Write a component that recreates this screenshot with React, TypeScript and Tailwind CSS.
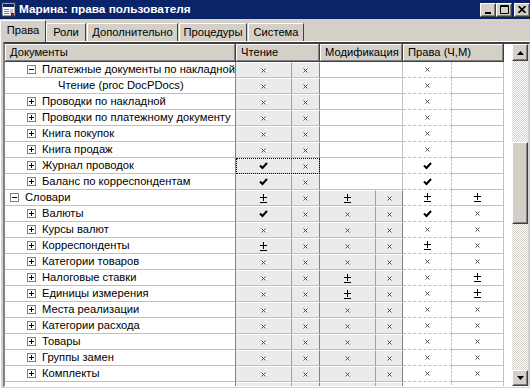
import React from "react";

type V = "x" | "c" | "pm" | "";

type Row = {
  label: string;
  level: 0 | 1 | 2;
  box?: "plus" | "minus";
  r: [V, V];
  m?: [V, V];
  p: [V, V];
};

const all: Pick<Row, "r" | "m" | "p"> = { r: ["x", "x"], m: ["x", "x"], p: ["x", "x"] };

const rows: Row[] = [
  { label: "Платежные документы по накладной/счету", level: 1, box: "minus", r: ["x", "x"], p: ["x", ""] },
  { label: "Чтение (proc DocPDocs)", level: 2, r: ["x", "x"], p: ["x", ""] },
  { label: "Проводки по накладной", level: 1, box: "plus", r: ["x", "x"], p: ["x", ""] },
  { label: "Проводки по платежному документу", level: 1, box: "plus", r: ["x", "x"], p: ["x", ""] },
  { label: "Книга покупок", level: 1, box: "plus", r: ["x", "x"], p: ["x", ""] },
  { label: "Книга продаж", level: 1, box: "plus", r: ["x", "x"], p: ["x", ""] },
  { label: "Журнал проводок", level: 1, box: "plus", r: ["c", "x"], p: ["c", ""] },
  { label: "Баланс по корреспондентам", level: 1, box: "plus", r: ["c", "x"], p: ["c", ""] },
  { label: "Словари", level: 0, box: "minus", r: ["pm", "x"], m: ["pm", "x"], p: ["pm", "pm"] },
  { label: "Валюты", level: 1, box: "plus", r: ["c", "x"], m: ["x", "x"], p: ["c", "x"] },
  { label: "Курсы валют", level: 1, box: "plus", ...all },
  { label: "Корреспонденты", level: 1, box: "plus", r: ["pm", "x"], m: ["x", "x"], p: ["pm", "x"] },
  { label: "Категории товаров", level: 1, box: "plus", ...all },
  { label: "Налоговые ставки", level: 1, box: "plus", r: ["x", "x"], m: ["pm", "x"], p: ["x", "pm"] },
  { label: "Единицы измерения", level: 1, box: "plus", r: ["x", "x"], m: ["pm", "x"], p: ["x", "pm"] },
  { label: "Места реализации", level: 1, box: "plus", ...all },
  { label: "Категории расхода", level: 1, box: "plus", ...all },
  { label: "Товары", level: 1, box: "plus", ...all },
  { label: "Группы замен", level: 1, box: "plus", ...all },
  { label: "Комплекты", level: 1, box: "plus", ...all },
  { label: "", level: 1, ...all },
];

function Mark({ v }: { v: V }) {
  if (v === "x")
    return (
      <svg width="5" height="5" viewBox="0 0 5 5">
        <path d="M0.5 0.5 L4.5 4.5 M4.5 0.5 L0.5 4.5" stroke="#505050" strokeWidth="1" />
      </svg>
    );
  if (v === "c")
    return (
      <svg width="9" height="8" viewBox="0 0 9 8">
        <path d="M1 3.5 L3.5 6 L8 1" stroke="#000" strokeWidth="2" fill="none" />
      </svg>
    );
  if (v === "pm")
    return (
      <svg width="7" height="9" viewBox="0 0 7 9">
        <path d="M0 3.5 H7 M3.5 0 V7 M0 8.5 H7" stroke="#000" strokeWidth="1" />
      </svg>
    );
  return null;
}

function TreeBox({ kind }: { kind: "plus" | "minus" }) {
  return (
    <svg width="9" height="9" viewBox="0 0 9 9" className="shrink-0">
      <rect x="0.5" y="0.5" width="8" height="8" fill="#fff" stroke="#808080" />
      <path d={kind === "plus" ? "M2 4.5 H7 M4.5 2 V7" : "M2 4.5 H7"} stroke="#000" />
    </svg>
  );
}

function Raised({ className = "", children }: { className?: string; children?: React.ReactNode }) {
  return (
    <div className={`border border-t-white border-l-white border-r-[#404040] border-b-[#404040] bg-[#d4d0c8] ${className}`}>
      <div className="flex h-full w-full items-center justify-center border border-t-[#d4d0c8] border-l-[#d4d0c8] border-r-[#808080] border-b-[#808080]">
        {children}
      </div>
    </div>
  );
}

function HeaderCell({ w, label }: { w: string; label: string }) {
  return (
    <div className={`${w} h-full shrink-0 border-r border-b border-r-[#404040] border-b-[#404040] bg-[#d4d0c8]`}>
      <div className="flex h-full items-center border-t border-l border-t-white border-l-white border-r border-b border-r-[#808080] border-b-[#808080] pl-[4px]">
        {label}
      </div>
    </div>
  );
}

function GridRow({ row, focus }: { row: Row; focus?: boolean }) {
  const indent = row.level === 0 ? "pl-[5px]" : row.level === 1 ? "pl-[22px]" : "pl-[53px]";
  return (
    <div className="flex h-[16px] shrink-0">
      <div className={`flex w-[231px] shrink-0 items-center gap-[6px] overflow-hidden whitespace-nowrap border-r border-b border-r-[#808080] border-b-[#c0c0c0] bg-white ${indent}`}>
        {row.box && <TreeBox kind={row.box} />}
        {row.label && <span>{row.label}</span>}
      </div>
      <div className="relative flex shrink-0">
        <div className="flex w-[56px] items-center justify-center border-r border-b border-r-[#a0a0a0] border-b-[#c0c0c0] border-t border-t-white bg-[#ebebeb]">
          <Mark v={row.r[0]} />
        </div>
        <div className="flex w-[28px] items-center justify-center border-r border-b border-r-[#808080] border-b-[#c0c0c0] border-t border-t-white bg-[#ebebeb]">
          <Mark v={row.r[1]} />
        </div>
        {focus && <div className="pointer-events-none absolute inset-0 border border-dotted border-black" />}
      </div>
      {row.m ? (
        <>
          <div className="flex w-[56px] shrink-0 items-center justify-center border-r border-b border-r-[#a0a0a0] border-b-[#c0c0c0] border-t border-t-white bg-[#ebebeb]">
            <Mark v={row.m[0]} />
          </div>
          <div className="flex w-[27px] shrink-0 items-center justify-center border-r border-b border-r-[#808080] border-b-[#c0c0c0] border-t border-t-white bg-[#ebebeb]">
            <Mark v={row.m[1]} />
          </div>
        </>
      ) : (
        <div className="w-[83px] shrink-0 border-r border-b border-r-[#c0c0c0] border-b-[#c0c0c0] bg-white" />
      )}
      <div className="flex w-[49px] shrink-0 items-center justify-center border-r border-dashed border-b border-r-[#c0c0c0] border-b-[#c0c0c0] bg-white">
        <Mark v={row.p[0]} />
      </div>
      <div className="flex w-[52px] shrink-0 items-center justify-center border-r border-b border-r-[#c0c0c0] border-b-[#c0c0c0] bg-white">
        <Mark v={row.p[1]} />
      </div>
      <div className="w-[8px] shrink-0 bg-white" />
    </div>
  );
}

function AppIcon() {
  return (
    <svg width="16" height="16" viewBox="0 0 16 16">
      <rect x="1" y="1" width="13" height="13" fill="#fff" stroke="#404040" />
      <rect x="2" y="2" width="11" height="3" fill="#0a246a" />
      <rect x="3" y="7" width="5" height="1" fill="#808080" />
      <rect x="3" y="9" width="5" height="1" fill="#808080" />
      <rect x="3" y="11" width="5" height="1" fill="#808080" />
      <rect x="9" y="7" width="3" height="5" fill="#c0c0c0" />
      <rect x="10" y="11" width="3" height="3" fill="#c00000" />
    </svg>
  );
}

const tabs = [
  { t: "Роли", w: "w-[40px]" },
  { t: "Дополнительно", w: "w-[91px]" },
  { t: "Процедуры", w: "w-[68px]" },
  { t: "Система", w: "w-[56px]" },
];

export default function App() {
  return (
    <div className="h-[388px] w-[530px] overflow-hidden bg-[#d4d0c8] text-[11.2px] leading-none text-black [font-family:'Liberation_Sans',Arial,sans-serif]">
      {/* title bar */}
      <div className="flex h-[19px] items-center bg-[#0a246a] pl-[1px]">
        <AppIcon />
        <span className="ml-[2px] text-[11.8px] font-bold text-white">Марина: права пользователя</span>
        <div className="ml-auto flex items-center">
          <Raised className="h-[14px] w-[16px]">
            <svg width="8" height="8" viewBox="0 0 8 8"><rect x="1" y="6" width="6" height="2" fill="#000" /></svg>
          </Raised>
          <Raised className="h-[14px] w-[16px]">
            <svg width="9" height="9" viewBox="0 0 9 9"><path d="M0.5 0.5 H8.5 V8.5 H0.5 Z M0.5 1.5 H8.5" stroke="#000" fill="none" /></svg>
          </Raised>
          <Raised className="ml-[2px] h-[14px] w-[16px]">
            <svg width="8" height="7" viewBox="0 0 8 7"><path d="M0.5 0 L7.5 7 M7.5 0 L0.5 7" stroke="#000" strokeWidth="1.6" /></svg>
          </Raised>
        </div>
      </div>

      {/* tabs */}
      <div className="flex h-[22px] items-end">
        <div className="relative z-10 -mb-[1px] flex h-[22px] w-[46px] items-center justify-center rounded-tl-[2px] border-l border-t border-l-white border-t-white border-r border-r-[#404040] bg-[#d4d0c8] pb-[2px]">
          Права
        </div>
        {tabs.map((t, i) => (
          <div
            key={t.t}
            className={`flex h-[18px] items-center justify-center rounded-tl-[2px] border-l border-t border-l-white border-t-white border-r border-r-[#404040] ${t.w} ${i === 0 ? "ml-0" : "ml-[1px]"}`}
          >
            {t.t}
          </div>
        ))}
      </div>

      {/* panel */}
      <div className="h-[347px] border-l border-t border-l-white border-t-white pl-[2px]">
        <div className="flex h-[345px] w-[527px] border-l-2 border-t-2 border-r border-b border-l-[#808080] border-t-[#404040] border-r-[#d4d0c8] border-b-white">
          <div className="flex w-[507px] flex-col overflow-hidden bg-white">
            {/* header */}
            <div className="flex h-[18px] shrink-0">
              <HeaderCell w="w-[231px]" label="Документы" />
              <HeaderCell w="w-[84px]" label="Чтение" />
              <HeaderCell w="w-[83px]" label="Модификация" />
              <HeaderCell w="w-[101px]" label="Права (Ч,М)" />
              <div className="w-[8px] bg-white" />
            </div>
            {rows.map((r, i) => (
              <GridRow key={i} row={r} focus={i === 6} />
            ))}
          </div>
          <div className="flex w-[16px] flex-col">
            <Raised className="h-[17px] w-[16px]">
              <svg width="7" height="4" viewBox="0 0 7 4"><path d="M3.5 0 L7 4 H0 Z" fill="#000" /></svg>
            </Raised>
            <div className="h-[81px] bg-[repeating-conic-gradient(#ffffff_0_25%,#d4d0c8_0_50%)] bg-[length:2px_2px]" />
            <Raised className="h-[82px] w-[16px]" />
            <div className="flex-1 bg-[repeating-conic-gradient(#ffffff_0_25%,#d4d0c8_0_50%)] bg-[length:2px_2px]" />
            <Raised className="h-[16px] w-[16px]">
              <svg width="7" height="4" viewBox="0 0 7 4"><path d="M0 0 H7 L3.5 4 Z" fill="#000" /></svg>
            </Raised>
          </div>
        </div>
      </div>
    </div>
  );
}
